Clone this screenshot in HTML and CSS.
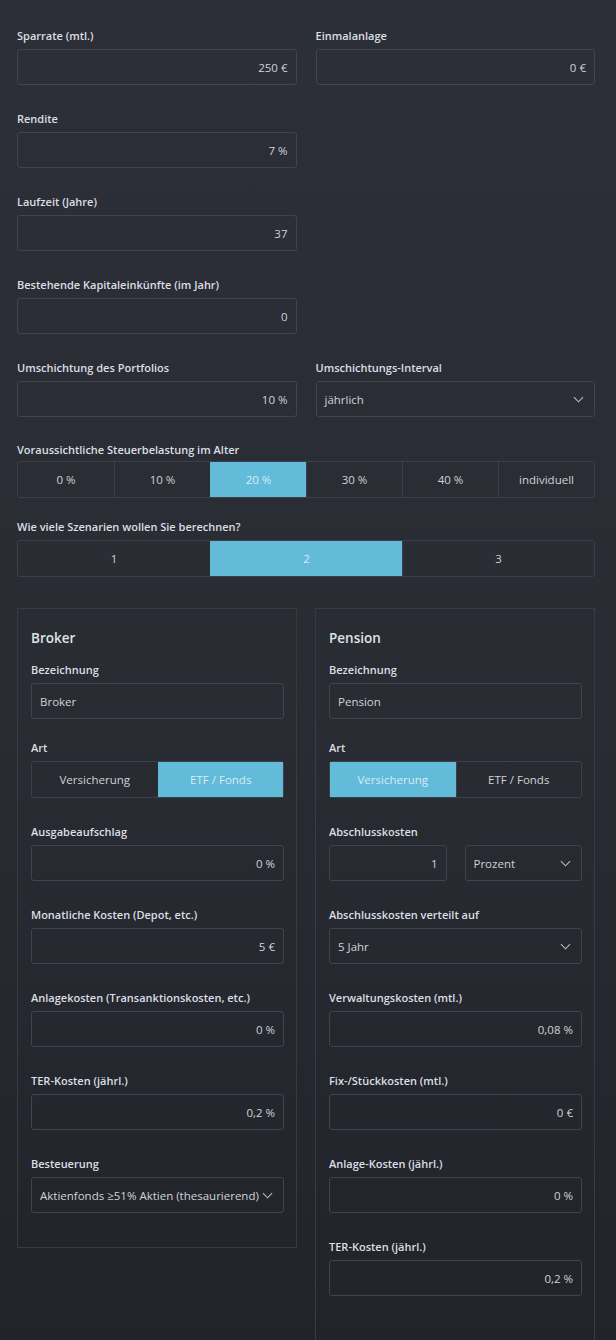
FILE: index.html
```html
<!DOCTYPE html>
<html lang="de">
<head>
<meta charset="utf-8">
<title>Sparplan Rechner</title>
<link rel="stylesheet" href="styles.css">
</head>
<body>
<main class="page">
  <div class="grid2">
    <div class="field">
      <div class="label">Sparrate (mtl.)</div>
      <div class="input num">250 €</div>
    </div>
    <div class="field">
      <div class="label">Einmalanlage</div>
      <div class="input num">0 €</div>
    </div>
    <div class="field">
      <div class="label">Rendite</div>
      <div class="input num">7 %</div>
    </div>
    <div></div>
    <div class="field">
      <div class="label">Laufzeit (Jahre)</div>
      <div class="input num">37</div>
    </div>
    <div></div>
    <div class="field">
      <div class="label">Bestehende Kapitaleinkünfte (im Jahr)</div>
      <div class="input num">0</div>
    </div>
    <div></div>
    <div class="field">
      <div class="label">Umschichtung des Portfolios</div>
      <div class="input num">10 %</div>
    </div>
    <div class="field">
      <div class="label">Umschichtungs-Interval</div>
      <div class="input select"><span>jährlich</span><svg class="chev" viewBox="0 0 12 7"><path d="M1 1l5 5 5-5"/></svg></div>
    </div>
  </div>

  <div class="field field-seg">
    <div class="label">Voraussichtliche Steuerbelastung im Alter</div>
    <div class="seg seg6">
      <div class="seg-item">0 %</div>
      <div class="seg-item">10 %</div>
      <div class="seg-item active">20 %</div>
      <div class="seg-item">30 %</div>
      <div class="seg-item">40 %</div>
      <div class="seg-item">individuell</div>
    </div>
  </div>

  <div class="field field-tight">
    <div class="label">Wie viele Szenarien wollen Sie berechnen?</div>
    <div class="seg seg3">
      <div class="seg-item">1</div>
      <div class="seg-item active">2</div>
      <div class="seg-item">3</div>
    </div>
  </div>

  <div class="cards">
    <section class="card">
      <h2 class="card-title">Broker</h2>
      <div class="field field-name">
        <div class="label">Bezeichnung</div>
        <div class="input text">Broker</div>
      </div>
      <div class="field">
        <div class="label">Art</div>
        <div class="seg seg2">
          <div class="seg-item">Versicherung</div>
          <div class="seg-item active">ETF / Fonds</div>
        </div>
      </div>
      <div class="field">
        <div class="label">Ausgabeaufschlag</div>
        <div class="input num">0 %</div>
      </div>
      <div class="field">
        <div class="label">Monatliche Kosten (Depot, etc.)</div>
        <div class="input num">5 €</div>
      </div>
      <div class="field">
        <div class="label">Anlagekosten (Transanktionskosten, etc.)</div>
        <div class="input num">0 %</div>
      </div>
      <div class="field">
        <div class="label">TER-Kosten (jährl.)</div>
        <div class="input num">0,2 %</div>
      </div>
      <div class="field">
        <div class="label">Besteuerung</div>
        <div class="input select"><span>Aktienfonds ≥51% Aktien (thesaurierend)</span><svg class="chev" viewBox="0 0 12 7"><path d="M1 1l5 5 5-5"/></svg></div>
      </div>
    </section>

    <section class="card card-long">
      <h2 class="card-title">Pension</h2>
      <div class="field field-name">
        <div class="label">Bezeichnung</div>
        <div class="input text">Pension</div>
      </div>
      <div class="field">
        <div class="label">Art</div>
        <div class="seg seg2">
          <div class="seg-item active">Versicherung</div>
          <div class="seg-item">ETF / Fonds</div>
        </div>
      </div>
      <div class="field">
        <div class="label">Abschlusskosten</div>
        <div class="pair">
          <div class="input num">1</div>
          <div class="input select"><span>Prozent</span><svg class="chev" viewBox="0 0 12 7"><path d="M1 1l5 5 5-5"/></svg></div>
        </div>
      </div>
      <div class="field">
        <div class="label">Abschlusskosten verteilt auf</div>
        <div class="input select"><span>5 Jahr</span><svg class="chev" viewBox="0 0 12 7"><path d="M1 1l5 5 5-5"/></svg></div>
      </div>
      <div class="field">
        <div class="label">Verwaltungskosten (mtl.)</div>
        <div class="input num">0,08 %</div>
      </div>
      <div class="field">
        <div class="label">Fix-/Stückkosten (mtl.)</div>
        <div class="input num">0 €</div>
      </div>
      <div class="field">
        <div class="label">Anlage-Kosten (jährl.)</div>
        <div class="input num">0 %</div>
      </div>
      <div class="field">
        <div class="label">TER-Kosten (jährl.)</div>
        <div class="input num">0,2 %</div>
      </div>
    </section>
  </div>
</main>
</body>
</html>
```

FILE: styles.css
```css
* { box-sizing: border-box; }

html, body {
  margin: 0;
  padding: 0;
}

body {
  min-height: 1340px;
  background: linear-gradient(180deg, #2c2f37 0%, #292c33 50%, #212329 100%);
  font-family: "Open Sans", "Noto Sans", sans-serif;
  color: #d4d7dc;
  overflow: hidden;
}

.page {
  padding: 28px 21px 0 17px;
  width: 616px;
}

.grid2 {
  display: grid;
  grid-template-columns: 1fr 1fr;
  column-gap: 19px;
}

.field {
  margin-bottom: 26px;
}

.field-seg {
  margin-top: -1px;
  margin-bottom: 21px;
}

.field-seg .label {
  margin-bottom: 3px;
}

.field-tight {
  margin-bottom: 31px;
}

.field-name {
  margin-bottom: 21px;
}

.label {
  font-size: 11px;
  line-height: 16px;
  font-weight: 600;
  color: #dcdfe4;
  margin-bottom: 5px;
  white-space: nowrap;
}

.input {
  height: 36px;
  border: 1px solid #41444c;
  border-radius: 3px;
  font-size: 11.5px;
  color: #d0d3d8;
  display: flex;
  align-items: center;
  padding: 0 8px;
  white-space: nowrap;
}

.num {
  justify-content: flex-end;
  padding-right: 8px;
}

.text {
  padding-left: 8px;
}

.select {
  justify-content: space-between;
  padding: 0 10px 0 8px;
}

.chev {
  width: 11px;
  height: 7px;
  flex: none;
  fill: none;
  stroke: #b9bcc2;
  stroke-width: 1.2;
}

.seg {
  display: grid;
  height: 37px;
  border: 1px solid #3d4048;
  border-radius: 3px;
}

.seg6 { grid-template-columns: repeat(6, 1fr); }
.seg3 { grid-template-columns: repeat(3, 1fr); }
.seg2 { grid-template-columns: repeat(2, 1fr); }

.seg-item {
  display: flex;
  align-items: center;
  justify-content: center;
  font-size: 11.5px;
  color: #cfd2d7;
  border-left: 1px solid #3d4048;
}

.seg-item:first-child {
  border-left: none;
}

.seg-item.active {
  background: #62bbd9;
  color: #d6edf5;
  border-left-color: #62bbd9;
}

.cards {
  display: grid;
  grid-template-columns: 280px 280px;
  column-gap: 18px;
  align-items: start;
}

.card {
  border: 1px solid #383b43;
  padding: 20px 12px 8px 13px;
}

.card-long {
  padding-bottom: 60px;
}

.card-title {
  margin: 0 0 15px;
  font-size: 13.5px;
  line-height: 18px;
  font-weight: 600;
  color: #dfe3e8;
}

.pair {
  display: grid;
  grid-template-columns: 1fr 1fr;
  column-gap: 18px;
}
```
